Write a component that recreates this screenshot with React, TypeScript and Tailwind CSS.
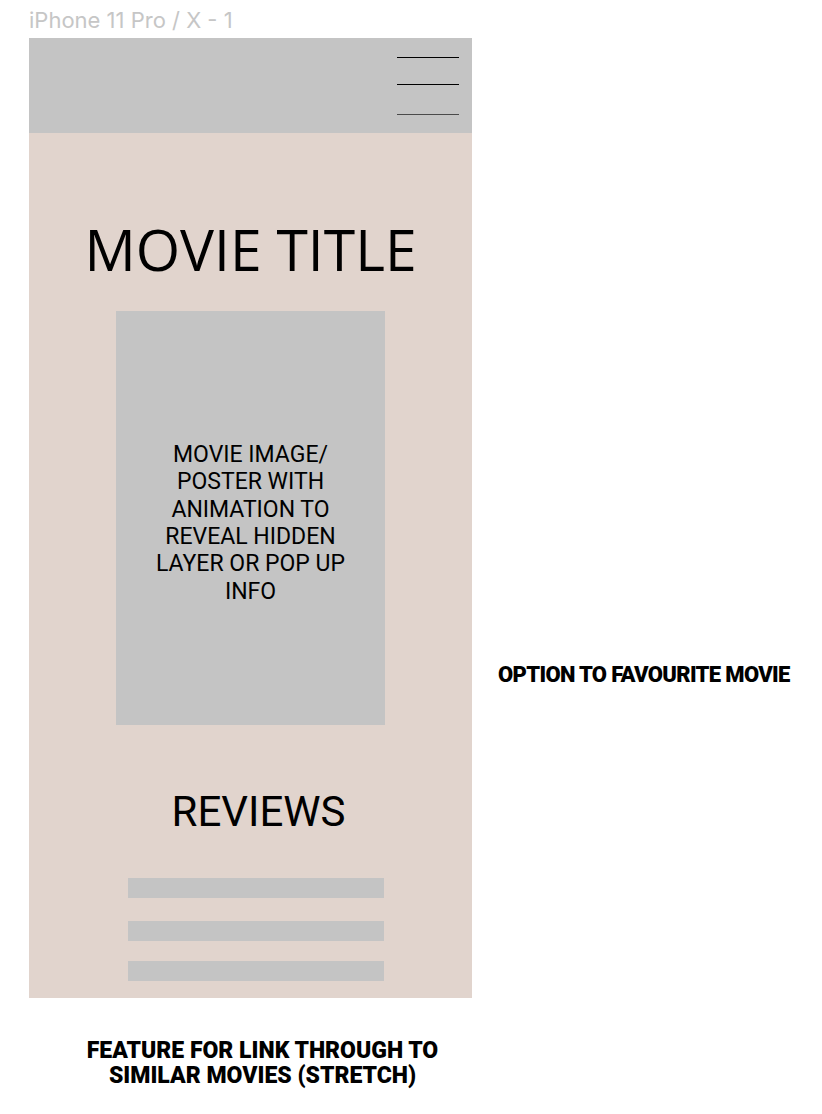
export default function App() {
  return (
    <div className="min-h-screen w-[822px] bg-white">
      <div className="flex pl-[29px] pt-[7px]">
        <div className="flex w-[443px] flex-col">
          <p className="h-[31px] text-[22px] leading-[26px] text-[#c6c6c6] font-['Inter',sans-serif]">
            iPhone 11 Pro / X - 1
          </p>
          <section className="flex h-[960px] flex-col bg-[#e1d4cd]">
            <header className="flex h-[95px] shrink-0 justify-end bg-[#c4c4c4] pr-[13px]">
              <div className="flex w-[62px] flex-col pt-[19px]">
                <span className="h-px bg-[#000]" />
                <span className="mt-[26px] h-px bg-[#000]" />
                <span className="mt-[29px] h-px bg-[#4a4a4a]" />
              </div>
            </header>
            <h1 className="mt-[80px] text-center text-[57px] leading-[72px] text-black font-['Open_Sans',sans-serif]">
              MOVIE TITLE
            </h1>
            <div className="mx-auto mt-[26px] flex h-[414px] w-[269px] items-center justify-center bg-[#c4c4c4] px-[24px] pt-[10px]">
              <p className="text-center text-[23px] leading-[27.3px] text-black font-['Roboto',sans-serif]">
                MOVIE IMAGE/ POSTER WITH ANIMATION TO REVEAL HIDDEN LAYER OR POP UP INFO
              </p>
            </div>
            <h2 className="mt-[63px] pl-[16px] text-center text-[42px] leading-[48px] text-black font-['Roboto',sans-serif]">
              REVIEWS
            </h2>
            <div className="ml-[99px] mt-[42px] flex w-[256px] flex-col">
              <span className="h-[20px] bg-[#c4c4c4]" />
              <span className="mt-[23px] h-[20px] bg-[#c4c4c4]" />
              <span className="mt-[20px] h-[20px] bg-[#c4c4c4]" />
            </div>
          </section>
          <p className="mt-[40px] pl-[24px] text-center text-[23px] leading-[25px] font-black text-black font-['Roboto',sans-serif]">
            FEATURE FOR LINK THROUGH TO
            <br />
            SIMILAR MOVIES (STRETCH)
          </p>
        </div>
        <div className="pl-[26px] pt-[656px]">
          <p className="text-[22px] leading-[24px] font-black tracking-[-0.03em] text-black font-['Roboto',sans-serif]">
            OPTION TO FAVOURITE MOVIE
          </p>
        </div>
      </div>
    </div>
  );
}
